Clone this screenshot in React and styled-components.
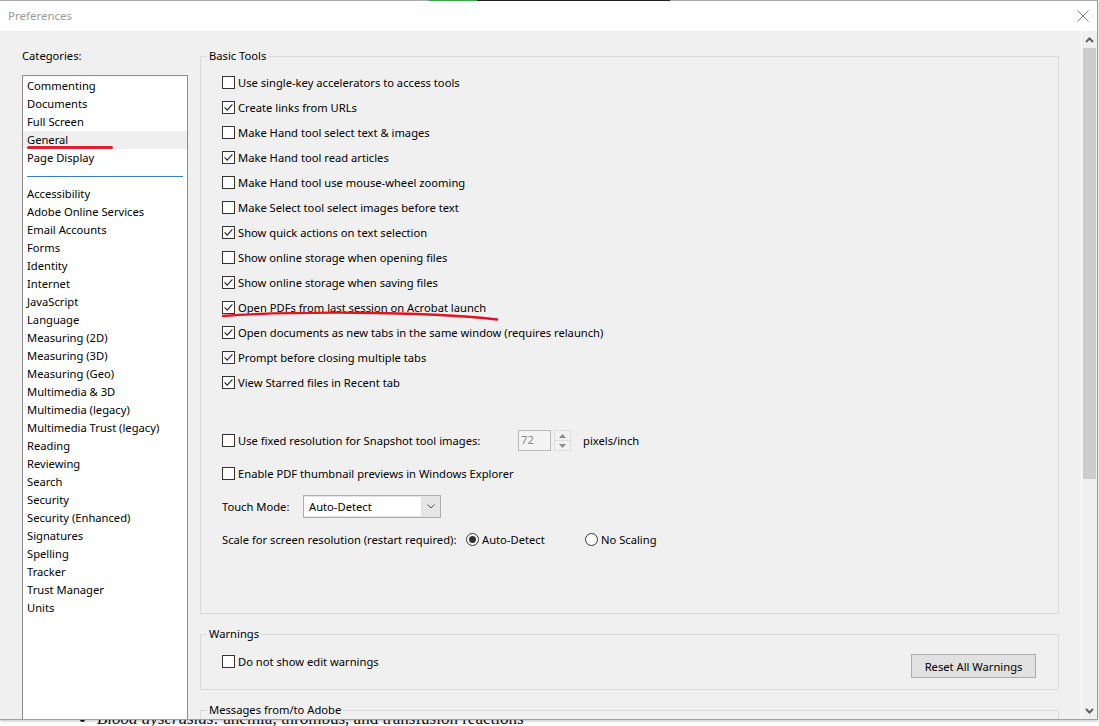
import React from "react";
import styled, { createGlobalStyle } from "styled-components";

const GlobalStyle = createGlobalStyle`
  html, body { margin: 0; padding: 0; background: #fff; }
  body { font-family: "Noto Sans", "DejaVu Sans", sans-serif; font-size: 11.2px; color: #000; }
  #root { width: 1099px; height: 726px; }
  * { box-sizing: border-box; }
`;

const Page = styled.div`
  width: 1099px;
  height: 726px;
  overflow: hidden;
  display: flex;
  flex-direction: column;
  background: #fff;
`;

const Dialog = styled.div`
  width: 1098px;
  height: 720px;
  flex: none;
  display: flex;
  flex-direction: column;
  border-right: 1px solid #9c9c9c;
  border-bottom: 1px solid #a0a0a0;
  box-shadow: 0 1px 3px rgba(0, 0, 0, 0.25);
  background: #f0f0f0;
`;

const TopEdge = styled.div`
  height: 1px;
  flex: none;
  display: flex;
`;

const EdgeSeg = styled.div`
  height: 1px;
  width: ${(p) => (p.$w ? `${p.$w}px` : "auto")};
  flex: ${(p) => (p.$w ? "none" : "1")};
  background: ${(p) => p.$c};
`;

const TitleRow = styled.div`
  height: 30px;
  flex: none;
  display: flex;
  align-items: center;
  justify-content: space-between;
  padding: 0 8px 0 8px;
  background: #fff;
`;

const Title = styled.span`
  color: #9a9a9a;
  font-size: 11.5px;
  line-height: 16px;
`;

const CloseIcon = styled.svg`
  width: 12px;
  height: 12px;
`;

const Body = styled.div`
  flex: 1;
  min-height: 0;
  display: flex;
  overflow: hidden;
`;

const LeftCol = styled.div`
  width: 188px;
  flex: none;
  padding: 17px 0 0 22px;
  display: flex;
  flex-direction: column;
`;

const CatLabel = styled.div`
  height: 16px;
  line-height: 16px;
  margin-bottom: 11px;
`;

const ListBox = styled.div`
  width: 166px;
  flex: 1;
  background: #fff;
  border: 1px solid #8c8c8c;
  border-bottom: none;
  padding-top: 1px;
`;

const ListItem = styled.div`
  position: relative;
  height: 18px;
  line-height: 18px;
  padding-left: 4px;
  white-space: nowrap;
  background: ${(p) => (p.$selected ? "#efefef" : "transparent")};
`;

const Scribble = styled.div`
  position: absolute;
  left: 4px;
  top: 15px;
  width: 86px;
  height: 3px;
  border-radius: 2px;
  background: #e0202a;
`;

const Separator = styled.div`
  height: 18px;
  display: flex;
  align-items: center;
  padding: 0 4px;
  &::after {
    content: "";
    flex: 1;
    height: 1px;
    background: #3a80bd;
  }
`;

const Main = styled.div`
  flex: 1;
  min-width: 0;
  padding: 17px 22px 0 12px;
  display: flex;
  flex-direction: column;
`;

const Group = styled.fieldset`
  margin: ${(p) => (p.$first ? "0" : "12px")} 0 0 0;
  padding: 0;
  border: 1px solid #dadada;
  min-width: 0;
  flex: none;
`;

const Legend = styled.legend`
  margin-left: 6px;
  padding: 0 2px;
  line-height: 16px;
  height: 16px;
`;

const GroupBody = styled.div`
  padding: ${(p) => p.$pad || "6px 22px 11px 21px"};
`;

const Row = styled.div`
  position: relative;
  display: flex;
  align-items: center;
  height: 25px;
  margin-top: ${(p) => p.$mt || 0}px;
  gap: ${(p) => (p.$gap !== undefined ? p.$gap : 3)}px;
  white-space: nowrap;
`;

const Box = styled.span`
  width: 13px;
  height: 13px;
  flex: none;
  border: 1px solid #333;
  background: #fff;
  display: flex;
  align-items: center;
  justify-content: center;
`;

const Label = styled.span`
  width: ${(p) => (p.$w ? `${p.$w}px` : "auto")};
  flex: none;
`;

const Annot = styled.svg`
  position: absolute;
  left: 0;
  top: 0;
  overflow: visible;
  pointer-events: none;
`;

const SpinInput = styled.div`
  width: 33px;
  height: 21px;
  flex: none;
  border: 1px solid #b9b9b9;
  background: #f4f4f4;
  color: #8a8a8a;
  padding-left: 2px;
  line-height: 18px;
`;

const SpinButtons = styled.div`
  width: 17px;
  height: 21px;
  flex: none;
  display: flex;
  flex-direction: column;
  border: 1px solid #dcdcdc;
  background: #f2f2f2;
`;

const SpinHalf = styled.div`
  flex: 1;
  display: flex;
  align-items: center;
  justify-content: center;
  border-top: ${(p) => (p.$bottom ? "1px solid #dcdcdc" : "none")};
`;

const Suffix = styled.span`
  margin-left: 9px;
`;

const Select = styled.div`
  width: 138px;
  height: 23px;
  flex: none;
  border: 1px solid #adadad;
  background: #e5e5e5;
  display: flex;
  align-items: stretch;
  padding: 1px 0 1px 0;
`;

const SelectField = styled.div`
  width: 117px;
  background: #fff;
  padding-left: 5px;
  line-height: 19px;
`;

const SelectArrow = styled.div`
  flex: 1;
  display: flex;
  align-items: center;
  justify-content: center;
`;

const RadioOpt = styled.span`
  display: flex;
  align-items: center;
  gap: 3px;
  width: ${(p) => (p.$w ? `${p.$w}px` : "auto")};
  flex: none;
`;

const Circle = styled.span`
  width: 13px;
  height: 13px;
  flex: none;
  border: 1px solid #333;
  border-radius: 50%;
  background: #fff;
  display: flex;
  align-items: center;
  justify-content: center;
  &::after {
    content: "";
    width: 7px;
    height: 7px;
    border-radius: 50%;
    background: ${(p) => (p.$on ? "#333" : "transparent")};
  }
`;

const WarnRow = styled.div`
  display: flex;
  justify-content: space-between;
  align-items: flex-start;
`;

const WarnCheck = styled(Row)`
  margin-top: 7px;
`;

const Button = styled.div`
  width: 125px;
  height: 24px;
  margin-top: 12px;
  background: #e1e1e1;
  border: 1px solid #adadad;
  display: flex;
  align-items: center;
  justify-content: center;
`;

const ScrollBar = styled.div`
  width: 16px;
  flex: none;
  display: flex;
  flex-direction: column;
  border-left: 1px solid #fbfbfb;
  background: #f0f0f0;
`;

const ScrollArrow = styled.div`
  height: 17px;
  flex: none;
  display: flex;
  align-items: center;
  justify-content: center;
`;

const Thumb = styled.div`
  height: 431px;
  flex: none;
  margin: 0 1px 0 1px;
  background: #cdcdcd;
`;

const ScrollSpace = styled.div`
  flex: 1;
`;

const DocStrip = styled.div`
  height: 6px;
  flex: none;
  overflow: hidden;
`;

const DocLine = styled.div`
  margin-top: -13px;
  padding-left: 80px;
  font-family: "Liberation Serif", "Times New Roman", serif;
  font-size: 17px;
  line-height: 24px;
  color: #111;
  white-space: nowrap;
  display: flex;
  align-items: flex-start;
`;

const Bullet = styled.span`
  width: 5px;
  height: 5px;
  flex: none;
  margin: 10px 12px 0 0;
  border-radius: 50%;
  background: #111;
`;

const Em = styled.i`
  margin-right: 4px;
`;

const Check = () => (
  <svg width="11" height="11" viewBox="0 0 11 11">
    <path d="M1.6 5.4 L4.2 8.1 L9.4 2.4" fill="none" stroke="#222" strokeWidth="1.1" />
  </svg>
);

const CheckItem = ({ checked, children, annot }) => (
  <Row>
    <Box>{checked && <Check />}</Box>
    <Label>{children}</Label>
    {annot && (
      <Annot width="280" height="28">
        <path d="M1 21 C 60 16.5, 200 15.5, 275 24.5" fill="none" stroke="#e0141e" strokeWidth="2.4" strokeLinecap="round" />
      </Annot>
    )}
  </Row>
);

const categoriesTop = ["Commenting", "Documents", "Full Screen", "General", "Page Display"];
const categoriesBottom = [
  "Accessibility", "Adobe Online Services", "Email Accounts", "Forms", "Identity", "Internet",
  "JavaScript", "Language", "Measuring (2D)", "Measuring (3D)", "Measuring (Geo)",
  "Multimedia & 3D", "Multimedia (legacy)", "Multimedia Trust (legacy)", "Reading", "Reviewing",
  "Search", "Security", "Security (Enhanced)", "Signatures", "Spelling", "Tracker",
  "Trust Manager", "Units",
];

const basicTools = [
  ["Use single-key accelerators to access tools", false],
  ["Create links from URLs", true],
  ["Make Hand tool select text & images", false],
  ["Make Hand tool read articles", true],
  ["Make Hand tool use mouse-wheel zooming", false],
  ["Make Select tool select images before text", false],
  ["Show quick actions on text selection", true],
  ["Show online storage when opening files", false],
  ["Show online storage when saving files", true],
  ["Open PDFs from last session on Acrobat launch", true, true],
  ["Open documents as new tabs in the same window (requires relaunch)", true],
  ["Prompt before closing multiple tabs", true],
  ["View Starred files in Recent tab", true],
];

export default function App() {
  return (
    <>
      <GlobalStyle />
      <Page>
        <Dialog>
          <TopEdge>
            <EdgeSeg $w={429} $c="#a8a8a8" />
            <EdgeSeg $w={48} $c="#35a845" />
            <EdgeSeg $w={193} $c="#1c1c1c" />
            <EdgeSeg $c="#a8a8a8" />
          </TopEdge>
          <TitleRow>
            <Title>Preferences</Title>
            <CloseIcon viewBox="0 0 12 12">
              <path d="M0.5 0.5 L11.5 11.5 M11.5 0.5 L0.5 11.5" stroke="#7a7a7a" strokeWidth="1" />
            </CloseIcon>
          </TitleRow>
          <Body>
            <LeftCol>
              <CatLabel>Categories:</CatLabel>
              <ListBox>
                {categoriesTop.map((c) => (
                  <ListItem key={c} $selected={c === "General"}>
                    {c}
                    {c === "General" && <Scribble />}
                  </ListItem>
                ))}
                <Separator />
                {categoriesBottom.map((c) => (
                  <ListItem key={c}>{c}</ListItem>
                ))}
              </ListBox>
            </LeftCol>
            <Main>
              <Group $first>
                <Legend>Basic Tools</Legend>
                <GroupBody $pad="6px 22px 61px 21px">
                  {basicTools.map(([t, c, a]) => (
                    <CheckItem key={t} checked={c} annot={a}>
                      {t}
                    </CheckItem>
                  ))}
                  <Row $mt={33}>
                    <Box />
                    <Label $w={277}>Use fixed resolution for Snapshot tool images:</Label>
                    <SpinInput>72</SpinInput>
                    <SpinButtons>
                      <SpinHalf>
                        <svg width="7" height="4" viewBox="0 0 7 4"><path d="M0 4 L3.5 0 L7 4 Z" fill="#8a8a8a" /></svg>
                      </SpinHalf>
                      <SpinHalf $bottom>
                        <svg width="7" height="4" viewBox="0 0 7 4"><path d="M0 0 L3.5 4 L7 0 Z" fill="#8a8a8a" /></svg>
                      </SpinHalf>
                    </SpinButtons>
                    <Suffix>pixels/inch</Suffix>
                  </Row>
                  <Row $mt={8}>
                    <Box />
                    <Label>Enable PDF thumbnail previews in Windows Explorer</Label>
                  </Row>
                  <Row $mt={8} $gap={0}>
                    <Label $w={81}>Touch Mode:</Label>
                    <Select>
                      <SelectField>Auto-Detect</SelectField>
                      <SelectArrow>
                        <svg width="8" height="5" viewBox="0 0 8 5">
                          <path d="M0.5 0.5 L4 4 L7.5 0.5" fill="none" stroke="#555" strokeWidth="1" />
                        </svg>
                      </SelectArrow>
                    </Select>
                  </Row>
                  <Row $mt={8} $gap={0}>
                    <Label $w={244}>Scale for screen resolution (restart required):</Label>
                    <RadioOpt $w={119}>
                      <Circle $on />
                      Auto-Detect
                    </RadioOpt>
                    <RadioOpt>
                      <Circle />
                      No Scaling
                    </RadioOpt>
                  </Row>
                </GroupBody>
              </Group>
              <Group>
                <Legend>Warnings</Legend>
                <GroupBody $pad="0 22px 11px 21px">
                  <WarnRow>
                    <WarnCheck>
                      <Box />
                      <Label>Do not show edit warnings</Label>
                    </WarnCheck>
                    <Button>Reset All Warnings</Button>
                  </WarnRow>
                </GroupBody>
              </Group>
              <Group>
                <Legend>Messages from/to Adobe</Legend>
                <GroupBody $pad="6px 22px 40px 21px" />
              </Group>
            </Main>
            <ScrollBar>
              <ScrollArrow>
                <svg width="9" height="6" viewBox="0 0 9 6">
                  <path d="M1 5 L4.5 1.5 L8 5" fill="none" stroke="#606060" strokeWidth="2" />
                </svg>
              </ScrollArrow>
              <Thumb />
              <ScrollSpace />
              <ScrollArrow>
                <svg width="9" height="6" viewBox="0 0 9 6">
                  <path d="M1 1 L4.5 4.5 L8 1" fill="none" stroke="#606060" strokeWidth="2" />
                </svg>
              </ScrollArrow>
            </ScrollBar>
          </Body>
        </Dialog>
        <DocStrip>
          <DocLine>
            <Bullet />
            <Em>Blood dyscrasias:</Em>
            <span>anemia, thrombus, and transfusion reactions</span>
          </DocLine>
        </DocStrip>
      </Page>
    </>
  );
}
